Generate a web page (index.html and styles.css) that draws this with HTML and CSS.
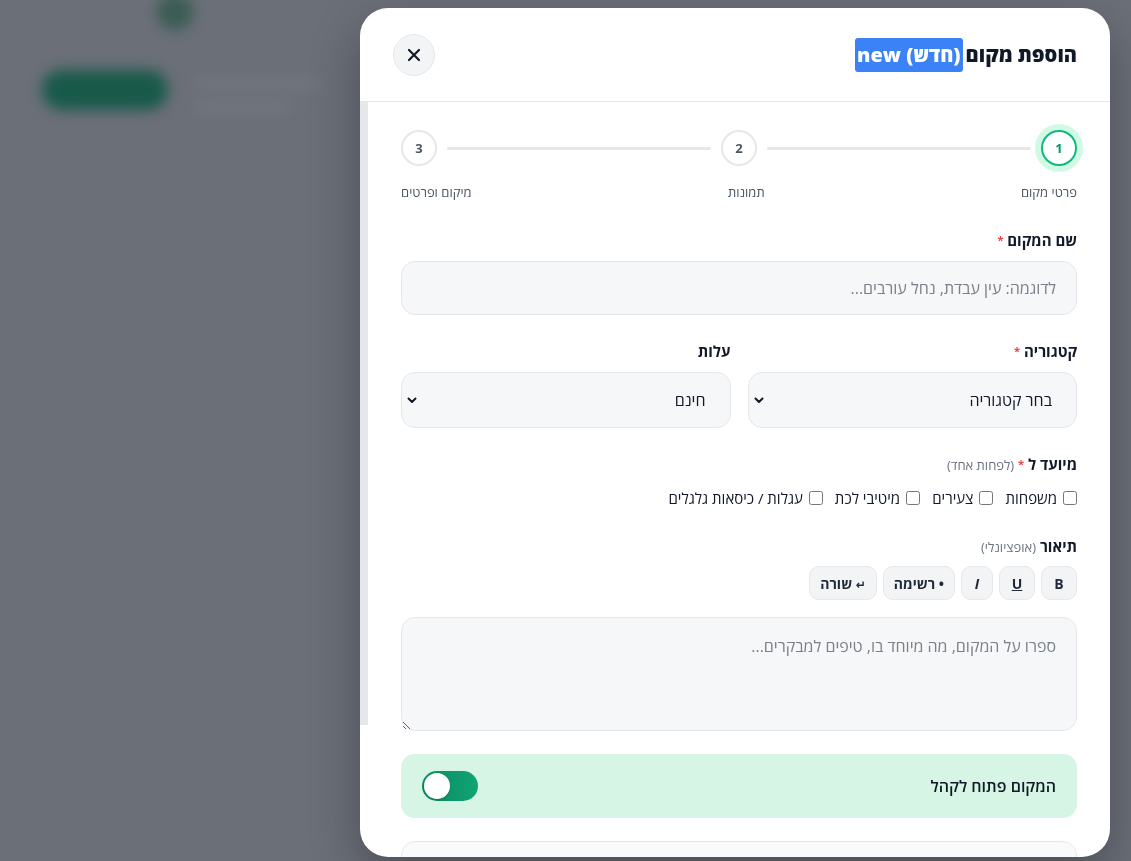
FILE: index.html
```html
<!DOCTYPE html>
<html lang="he" dir="rtl">
<head>
  <meta charset="UTF-8">
  <meta name="viewport" content="width=device-width, initial-scale=1.0">
  <title>הוספת מקום</title>
  <link rel="stylesheet" href="styles.css">
</head>
<body>
  <!-- the page behind the dialog, blurred -->
  <div class="page">
    <div class="page-top">
      <div class="page-avatar"></div>
    </div>
    <div class="page-hero">
      <div class="page-btn"></div>
      <div class="page-lines">
        <div class="page-line"></div>
        <div class="page-line short"></div>
      </div>
    </div>
  </div>

  <div class="overlay">
    <div class="modal">
      <header class="modal-head">
        <h2 class="modal-title">הוספת מקום <span class="badge">(חדש) new</span></h2>
        <button class="close-btn" type="button" aria-label="סגור">
          <svg width="14" height="14" viewBox="0 0 14 14"><path d="M2 2L12 12M12 2L2 12" stroke="#111827" stroke-width="2.2" stroke-linecap="round"/></svg>
        </button>
      </header>

      <div class="modal-main">
        <div class="modal-body">
          <div class="stepper">
            <div class="steps">
              <div class="step-dot active">1</div>
              <div class="step-line"></div>
              <div class="step-dot">2</div>
              <div class="step-line"></div>
              <div class="step-dot">3</div>
            </div>
            <div class="step-labels">
              <span>פרטי מקום</span>
              <span>תמונות</span>
              <span>מיקום ופרטים</span>
            </div>
          </div>

          <div class="field">
            <label class="field-label">שם המקום <span class="req">*</span></label>
            <input class="input" type="text" placeholder="לדוגמה: עין עבדת, נחל עורבים...">
          </div>

          <div class="field row">
            <div>
              <label class="field-label">קטגוריה <span class="req">*</span></label>
              <div class="select-wrap">
                <select class="select">
                  <option>בחר קטגוריה</option>
                </select>
                <svg class="chevron" width="10" height="7" viewBox="0 0 10 7"><path d="M1.5 1.5L5 5L8.5 1.5" fill="none" stroke="#111827" stroke-width="2" stroke-linecap="round" stroke-linejoin="round"/></svg>
              </div>
            </div>
            <div>
              <label class="field-label">עלות</label>
              <div class="select-wrap">
                <select class="select">
                  <option>חינם</option>
                </select>
                <svg class="chevron" width="10" height="7" viewBox="0 0 10 7"><path d="M1.5 1.5L5 5L8.5 1.5" fill="none" stroke="#111827" stroke-width="2" stroke-linecap="round" stroke-linejoin="round"/></svg>
              </div>
            </div>
          </div>

          <div class="field">
            <label class="field-label">מיועד ל <span class="req">*</span> <span class="hint">(לפחות אחד)</span></label>
            <div class="checks">
              <label class="check"><input type="checkbox"> משפחות</label>
              <label class="check"><input type="checkbox"> צעירים</label>
              <label class="check"><input type="checkbox"> מיטיבי לכת</label>
              <label class="check"><input type="checkbox"> עגלות / כיסאות גלגלים</label>
            </div>
          </div>

          <div class="field">
            <label class="field-label tight">תיאור <span class="hint">(אופציונלי)</span></label>
            <div class="toolbar">
              <button class="tool" type="button">B</button>
              <button class="tool" type="button"><u>U</u></button>
              <button class="tool i" type="button"><i>I</i></button>
              <button class="tool" type="button">• רשימה</button>
              <button class="tool" type="button"><span class="ret">↵</span> שורה</button>
            </div>
            <textarea class="textarea" placeholder="ספרו על המקום, מה מיוחד בו, טיפים למבקרים..."></textarea>
          </div>

          <div class="public-box">
            <span>המקום פתוח לקהל</span>
            <label class="toggle">
              <input type="checkbox" checked>
              <span class="knob"></span>
            </label>
          </div>

          <div class="next-box"></div>
        </div>
        <div class="scroll-rail">
          <div class="scroll-thumb"></div>
        </div>
      </div>
    </div>
  </div>
</body>
</html>
```

FILE: styles.css
```css
* {
  box-sizing: border-box;
}

html,
body {
  margin: 0;
  height: 100%;
}

body {
  background-color: #6b6f78;
  color: #111827;
  font-family: "Open Sans", "Liberation Sans", "DejaVu Sans", sans-serif;
  overflow: hidden;
}

/* blurred page behind */
.page {
  direction: ltr;
  filter: blur(7px);
  padding-left: 42px;
}

.page-top {
  margin-top: -6px;
  padding-left: 115px;
}

.page-avatar {
  width: 36px;
  height: 36px;
  border-radius: 50%;
  background-color: #3a5c52;
}

.page-hero {
  display: flex;
  gap: 24px;
  margin-top: 40px;
}

.page-btn {
  width: 126px;
  height: 40px;
  border-radius: 20px;
  background-color: #185a4a;
}

.page-lines {
  display: flex;
  flex-direction: column;
  gap: 14px;
  padding-top: 8px;
}

.page-line {
  width: 130px;
  height: 10px;
  border-radius: 5px;
  background-color: #73777f;
}

.page-line.short {
  width: 100px;
}

/* dialog */
.overlay {
  position: fixed;
  inset: 0;
  display: flex;
  justify-content: flex-start;
  padding: 8px 21px 4px;
}

.modal {
  width: 750px;
  height: 849px;
  background-color: #ffffff;
  border-radius: 28px;
  display: flex;
  flex-direction: column;
  overflow: hidden;
  box-shadow: 0 20px 50px rgba(0, 0, 0, 0.3);
}

.modal-head {
  flex: none;
  height: 94px;
  display: flex;
  align-items: center;
  justify-content: space-between;
  padding: 0 33px;
  border-bottom: 1px solid #e5e7eb;
}

.modal-title {
  margin: 0;
  font-size: 20px;
  font-weight: 800;
  display: flex;
  align-items: center;
  gap: 3px;
}

.badge {
  background-color: #3b82f6;
  color: #ffffff;
  height: 34px;
  line-height: 34px;
  padding: 0 2px;
  border-radius: 3px;
}

.close-btn {
  width: 42px;
  height: 42px;
  border-radius: 50%;
  border: 1px solid #e5e7eb;
  background-color: #f3f4f6;
  display: flex;
  align-items: center;
  justify-content: center;
  padding: 0;
}

.modal-main {
  flex: 1;
  display: flex;
  min-height: 0;
}

.modal-body {
  flex: 1;
  overflow: hidden;
  padding: 28px 33px 37px;
}

.scroll-rail {
  flex: none;
  width: 8px;
}

.scroll-thumb {
  height: 623px;
  background-color: #e5e7eb;
}

/* stepper */
.stepper {
  margin-bottom: 29px;
}

.steps {
  display: flex;
  align-items: center;
}

.step-dot {
  width: 36px;
  height: 36px;
  border-radius: 50%;
  border: 2px solid #e5e7eb;
  background-color: #ffffff;
  display: flex;
  align-items: center;
  justify-content: center;
  font-size: 13px;
  font-weight: 700;
  color: #4b5563;
}

.step-dot.active {
  border-color: #10b981;
  color: #059669;
  box-shadow: 0 0 0 6px #d1fae5;
}

.step-line {
  flex: 1;
  height: 3px;
  margin: 0 10px;
  border-radius: 2px;
  background-color: #e5e7eb;
}

.step-labels {
  display: flex;
  justify-content: space-between;
  margin-top: 17px;
  font-size: 13px;
  line-height: 18px;
  color: #4b5563;
}

/* fields */
.field {
  margin-bottom: 26px;
}

.field-label {
  display: block;
  font-size: 15px;
  font-weight: 700;
  line-height: 20px;
  margin-bottom: 11px;
  color: #111827;
}

.field-label.tight {
  margin-bottom: 9px;
}

.req {
  color: #ef4444;
  font-size: 11px;
  vertical-align: top;
}

.hint {
  font-size: 13px;
  font-weight: 400;
  color: #6b7280;
}

.input,
.select,
.textarea {
  width: 100%;
  border: 1px solid #e5e7eb;
  border-radius: 14px;
  background-color: #f6f7f9;
  font-family: inherit;
  font-size: 16px;
  color: #111827;
}

.input {
  height: 54px;
  padding: 0 20px;
}

.input::placeholder,
.textarea::placeholder {
  color: #7b8089;
}

.row {
  display: grid;
  grid-template-columns: 1fr 1fr;
  gap: 17px;
}

.select-wrap {
  position: relative;
}

.select {
  appearance: none;
  height: 56px;
  padding: 0 24px 0 30px;
}

.chevron {
  position: absolute;
  left: 6px;
  top: 25px;
  pointer-events: none;
}

.checks {
  display: flex;
  flex-wrap: wrap;
  gap: 12px;
}

.check {
  display: flex;
  align-items: center;
  gap: 6px;
  font-size: 15px;
  line-height: 24px;
}

.check input {
  width: 14px;
  height: 14px;
  margin: 0;
}

.toolbar {
  display: flex;
  gap: 6px;
  margin-bottom: 17px;
}

.tool {
  height: 34px;
  min-width: 36px;
  padding: 0 10px;
  border: 1px solid #e5e7eb;
  border-radius: 10px;
  background-color: #f3f4f6;
  font-family: inherit;
  font-size: 14px;
  font-weight: 700;
  color: #1f2937;
}

.tool.i {
  min-width: 32px;
}

.ret {
  font-size: 12px;
}

.textarea {
  display: block;
  height: 114px;
  padding: 18px 20px;
  resize: vertical;
  line-height: 20px;
}

.public-box {
  height: 64px;
  margin-top: -3px;
  padding: 0 21px;
  border-radius: 14px;
  background-color: #d6f5e5;
  display: flex;
  align-items: center;
  justify-content: space-between;
  font-size: 16px;
  font-weight: 600;
}

.toggle {
  position: relative;
  width: 56px;
  height: 30px;
}

.toggle input {
  display: none;
}

.knob {
  display: flex;
  width: 56px;
  height: 30px;
  padding: 2px;
  border-radius: 15px;
  background: linear-gradient(90deg, #0b8a5f, #10a474);
}

.knob::after {
  content: "";
  width: 26px;
  height: 26px;
  border-radius: 50%;
  background-color: #ffffff;
  box-shadow: 0 1px 2px rgba(0, 0, 0, 0.2);
  margin-right: auto;
}

.next-box {
  height: 140px;
  margin-top: 23px;
  border: 1px solid #e5e7eb;
  border-radius: 14px;
  background-color: #f9fafb;
}
```
